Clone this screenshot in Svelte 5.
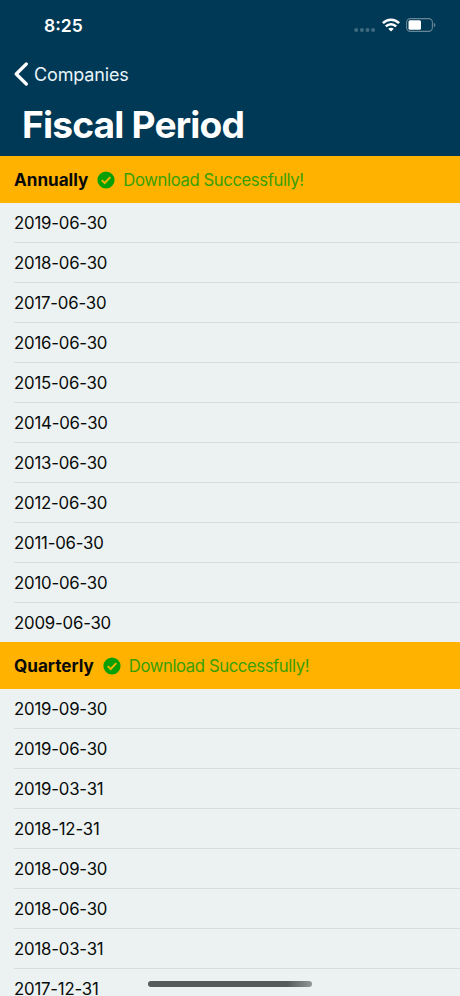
<script lang="ts">
  interface Section {
    title: string;
    status: string;
    periods: string[];
  }

  const sections: Section[] = [
    {
      title: 'Annually',
      status: 'Download Successfully!',
      periods: [
        '2019-06-30',
        '2018-06-30',
        '2017-06-30',
        '2016-06-30',
        '2015-06-30',
        '2014-06-30',
        '2013-06-30',
        '2012-06-30',
        '2011-06-30',
        '2010-06-30',
        '2009-06-30',
      ],
    },
    {
      title: 'Quarterly',
      status: 'Download Successfully!',
      periods: [
        '2019-09-30',
        '2019-06-30',
        '2019-03-31',
        '2018-12-31',
        '2018-09-30',
        '2018-06-30',
        '2018-03-31',
        '2017-12-31',
      ],
    },
  ];
</script>

<div class="screen">
  <header class="top">
    <div class="status-bar">
      <span class="time">8:25</span>
      <div class="indicators">
        <svg class="signal" width="22" height="4" viewBox="0 0 22 4">
          <circle cx="2.2" cy="2" r="2" />
          <circle cx="7.9" cy="2" r="2" />
          <circle cx="13.5" cy="2" r="2" />
          <circle cx="19.1" cy="2" r="2" />
        </svg>
        <svg class="wifi" width="18" height="14" viewBox="0 0 18 14">
          <g fill="none" stroke="#fff" stroke-width="2.5">
            <path d="M0.9 5.2C5.4 0.5 12.6 0.5 17.1 5.2" />
            <path d="M3.8 8.4C6.8 5.5 11.2 5.5 14.2 8.4" />
          </g>
          <path d="M9 13.6L6.2 10.8C7.8 9.3 10.2 9.3 11.8 10.8Z" fill="#fff" />
        </svg>
        <svg class="battery" width="30" height="14" viewBox="0 0 30 14">
          <rect x="0.6" y="0.6" width="25.8" height="12.8" rx="3.8" fill="none" stroke="#688696" stroke-width="1.1" />
          <rect x="2.5" y="2.2" width="12.5" height="9.6" rx="1.5" fill="#fff" />
          <path d="M27.8 4.8C29.9 5.6 29.9 8.4 27.8 9.2Z" fill="#688696" />
        </svg>
      </div>
    </div>
    <button class="back">
      <svg width="14" height="24" viewBox="0 0 14 24">
        <path d="M12.3 2L2.2 12L12.3 22" fill="none" stroke="#fff" stroke-width="3.2" stroke-linecap="round" stroke-linejoin="round" />
      </svg>
      <span>Companies</span>
    </button>
    <h1>Fiscal Period</h1>
  </header>

  {#each sections as section}
    <section>
      <div class="section-header">
        <h2>{section.title}</h2>
        <svg class="check" width="18" height="18" viewBox="0 0 18 18">
          <circle cx="9" cy="9" r="8.6" fill="#06a006" />
          <path d="M4.7 9.1L7.7 12L13.3 6.1" fill="none" stroke="#f0b400" stroke-width="2" />
        </svg>
        <span class="status">{section.status}</span>
      </div>
      <ul>
        {#each section.periods as period}
          <li>{period}</li>
        {/each}
      </ul>
    </section>
  {/each}

  <div class="home-indicator"></div>
</div>

<style>
  :global(body) {
    margin: 0;
    background: #ecf2f1;
  }

  .screen {
    position: relative;
    width: 460px;
    height: 996px;
    overflow: hidden;
    background: #ecf2f1;
    color: #080a0a;
    font-family: Inter, 'Liberation Sans', sans-serif;
  }

  .top {
    box-sizing: border-box;
    height: 156px;
    background: #003955;
    color: #fff;
  }

  .status-bar {
    display: flex;
    align-items: center;
    justify-content: space-between;
    height: 51px;
    padding: 0 24px 0 44px;
  }

  .time {
    font-size: 17.5px;
    font-weight: 600;
  }

  .indicators {
    display: flex;
    align-items: center;
    gap: 6px;
    margin-top: -1px;
  }

  .signal {
    margin-top: 9px;
    fill: #3f6a80;
  }

  .back {
    display: flex;
    align-items: center;
    gap: 6px;
    height: 46px;
    padding: 0 0 0 14px;
    border: none;
    background: none;
    color: #e9f5fb;
    font-family: inherit;
    font-size: 18px;
    letter-spacing: -0.15px;
  }

  h1 {
    margin: 3px 0 0 22px;
    font-size: 37.2px;
    font-weight: 700;
    letter-spacing: -0.85px;
    line-height: 49px;
  }

  .section-header {
    display: flex;
    align-items: center;
    height: 47px;
    padding-left: 14px;
    background: #ffb200;
  }

  h2 {
    margin: 0;
    font-size: 17.1px;
    font-weight: 700;
    line-height: 22px;
  }

  .check {
    margin: 0 8px 0 9px;
  }

  .status {
    color: #38a000;
    font-size: 16.7px;
    letter-spacing: -0.4px;
    line-height: 22px;
  }

  ul {
    margin: 0;
    padding: 0 0 0 14px;
    list-style: none;
  }

  li {
    box-sizing: border-box;
    height: 40px;
    border-bottom: 1px solid #d8dedd;
    font-size: 16.8px;
    letter-spacing: -0.2px;
    line-height: 40px;
  }

  li:last-child {
    height: 39px;
    border-bottom: none;
  }

  .home-indicator {
    position: absolute;
    left: 148px;
    bottom: 9px;
    width: 164px;
    height: 6px;
    border-radius: 3px;
    background: linear-gradient(to right, #555b59 85%, #929795);
  }
</style>
